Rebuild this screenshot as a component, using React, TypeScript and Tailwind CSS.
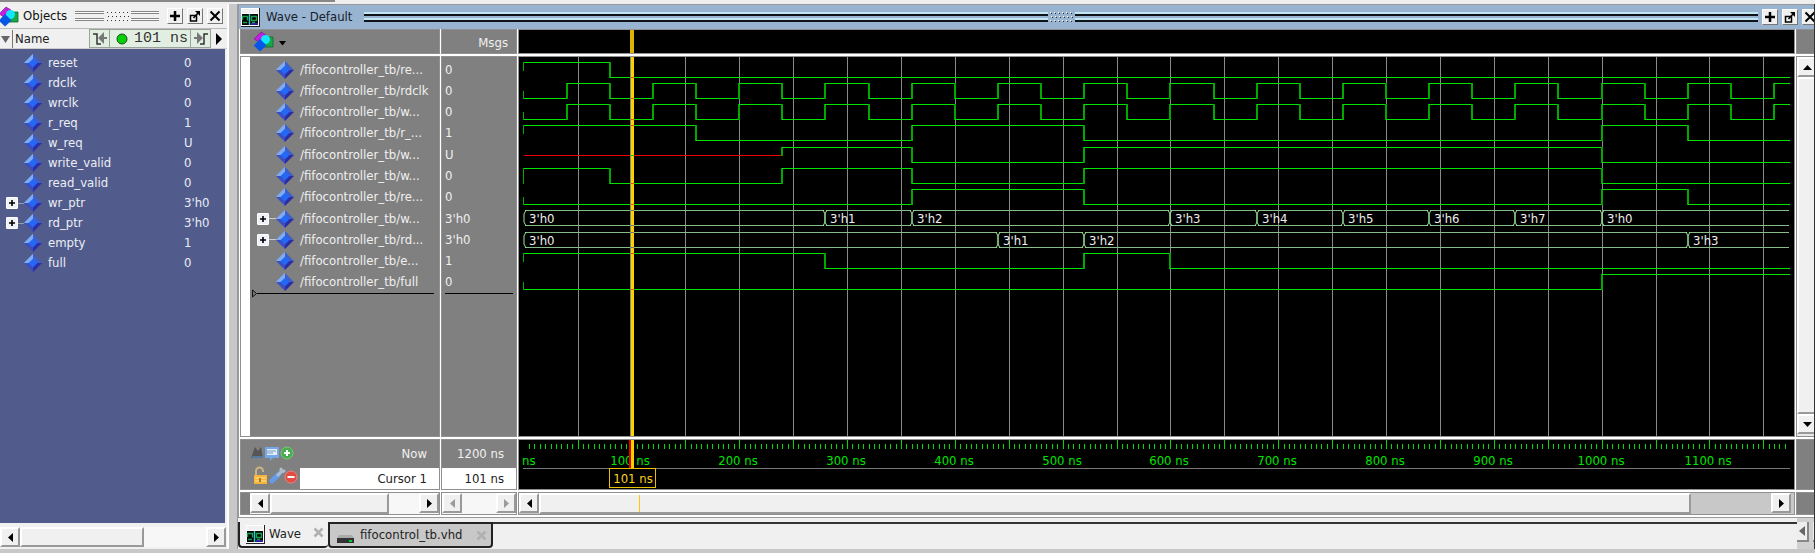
import React from "react";

type Signal = { name: string; value: string; bus?: boolean; path: string };

const signals: Signal[] = [
  { name: "reset", value: "0", path: "/fifocontroller_tb/re..." },
  { name: "rdclk", value: "0", path: "/fifocontroller_tb/rdclk" },
  { name: "wrclk", value: "0", path: "/fifocontroller_tb/w..." },
  { name: "r_req", value: "1", path: "/fifocontroller_tb/r_..." },
  { name: "w_req", value: "U", path: "/fifocontroller_tb/w..." },
  { name: "write_valid", value: "0", path: "/fifocontroller_tb/w..." },
  { name: "read_valid", value: "0", path: "/fifocontroller_tb/re..." },
  { name: "wr_ptr", value: "3'h0", bus: true, path: "/fifocontroller_tb/w..." },
  { name: "rd_ptr", value: "3'h0", bus: true, path: "/fifocontroller_tb/rd..." },
  { name: "empty", value: "1", path: "/fifocontroller_tb/e..." },
  { name: "full", value: "0", path: "/fifocontroller_tb/full" },
];

type Event = [number, string];
const END = 1175;
const clock: Event[] = [[0, "0"]];
for (let t = 40, v = 1; t < END; t += 40, v = 1 - v) clock.push([t, String(v)]);

const waves: Event[][] = [
  [[0, "1"], [80, "0"]],
  clock,
  clock,
  [[0, "1"], [160, "0"], [360, "1"], [520, "0"], [1000, "1"], [1080, "0"]],
  [[0, "U"], [240, "1"], [360, "0"], [520, "1"], [1000, "0"]],
  [[0, "1"], [80, "0"], [240, "1"], [360, "0"], [520, "1"], [1000, "0"]],
  [[0, "0"], [360, "1"], [520, "0"], [1000, "1"], [1080, "0"]],
  [[0, "3'h0"], [280, "3'h1"], [360, "3'h2"], [600, "3'h3"], [680, "3'h4"], [760, "3'h5"], [840, "3'h6"], [920, "3'h7"], [1000, "3'h0"]],
  [[0, "3'h0"], [440, "3'h1"], [520, "3'h2"], [1080, "3'h3"]],
  [[0, "1"], [280, "0"], [520, "1"], [600, "0"]],
  [[0, "0"], [1000, "1"]],
];

const xAt = (t: number) => Math.round(4.6 + t * 1.078);
const highAt = (row: number) => Math.round(4.6 + row * 21.25);
const CURSOR = 112;
const grid = Array.from({ length: 23 }, (_, i) => (i + 1) * 50);

function Diamond() {
  return (
    <svg width="18" height="18" viewBox="0 0 18 18" className="shrink-0" aria-hidden="true">
      <path d="M9 0L0 9l9-2z" fill="#78a8f4" />
      <path d="M9 0l9 9-9 1z" fill="#3f5fc8" />
      <path d="M0 9l9 9V9z" fill="#3b50c0" />
      <path d="M18 9l-9 9V9z" fill="#2c2ca4" />
      <path d="M9 4.5L13.5 9 9 13.500 4.500 9z" fill="#2468f6" />
      <path d="M9 0L0 9h4.500L9 4.500z" fill="#7eabf5" />
    </svg>
  );
}

function Shapes() {
  return (
    <svg width="21" height="21" viewBox="0 0 21 21" className="shrink-0" aria-hidden="true">
      <path d="M1 8L8 1l5 3-7 7z" fill="#c41fe0" stroke="#6f1485" strokeWidth=".6" />
      <path d="M11 6h9v10h-9z" fill="#18a845" stroke="#0d6b2b" strokeWidth=".8" />
      <circle cx="12.500" cy="8.500" r="4.500" fill="#12e6fb" />
      <path d="M7 8l6.500 6.500L7 20.500.8 14.500z" fill="#0757e6" />
    </svg>
  );
}

function WaveIcon() {
  return (
    <svg width="19" height="19" viewBox="0 0 19 19" className="shrink-0" aria-hidden="true">
      <path d="M0 0h19v19H0z" fill="#222" />
      <path d="M0 0h18v18H0z" fill="#fff" />
      <path d="M1 1h16v4H1z" fill="#f0f0f0" />
      <path d="M1 6h16v11H1z" fill="#050505" />
      <path d="M1.500 12V8.500h5v4M10.500 8.500h5v4h-5zM2 14.500h4M11 14.500h3" fill="none" stroke="#18a050" strokeWidth="1.400" />
      <path d="M8.500 6v11" stroke="#25cfd0" strokeWidth="1.400" />
      <path d="M10 16h7" stroke="#3928d8" strokeWidth="1.500" />
    </svg>
  );
}

function PlusBox({ label }: { label: string }) {
  return (
    <button aria-label={label} className="flex size-3 shrink-0 items-center justify-center rounded-[1px] border border-white bg-[#eef1f8]">
      <svg width="8" height="8" viewBox="0 0 8 8" aria-hidden="true">
        <path d="M1 4h6M4 1v6" stroke="#000" strokeWidth="1.600" />
      </svg>
    </button>
  );
}

function TitleButton({ label, children }: { label: string; children: React.ReactNode }) {
  return (
    <button aria-label={label} className="flex size-4 shrink-0 items-center justify-center border border-b-[#777] border-l-white border-r-[#777] border-t-white bg-[#f0f0f0]">
      <svg width="14" height="14" viewBox="0 0 14 14" fill="none" stroke="#000" strokeWidth="2" className="shrink-0" aria-hidden="true">
        {children}
      </svg>
    </button>
  );
}

function TitleButtons() {
  return (
    <>
      <TitleButton label="Maximize"><path d="M7 2v10M2 7h10" strokeWidth="2.500" /></TitleButton>
      <TitleButton label="Undock">
        <path d="M2.500 6.500h6v5.500h-6z" strokeWidth="1.500" />
        <path d="M7 2h5v5z" fill="#000" stroke="none" />
        <path d="M5.500 9l5-5.500" strokeWidth="1.500" />
      </TitleButton>
      <TitleButton label="Close"><path d="M2.500 2.500l9 9M11.500 2.500l-9 9" /></TitleButton>
    </>
  );
}

function Grip({ active }: { active?: boolean }) {
  const bar = active
    ? "h-1 border-b-2 border-[#101418] bg-[#c3e6f5]"
    : "h-[3px] border-b border-[#858585] bg-white border-t border-t-[#858585]";
  const column = active ? "flex min-w-0 flex-1 flex-col gap-[2px]" : "flex min-w-0 flex-1 flex-col gap-1";
  return (
    <div className="flex min-w-0 flex-1 items-center gap-[2px]" aria-hidden="true">
      <div className={column}><div className={bar} /><div className={bar} /></div>
      <svg width="23" height="11" className="shrink-0">
        {[0, 1, 2].map((r) =>
          [0, 1, 2, 3, 4, 5].map((c) => (
            <g key={`${r}-${c}`}>
              <rect x={c * 4 + (r % 2)} y={r * 4} width="1" height="1" fill="#fff" />
              <rect x={c * 4 + 1 + (r % 2)} y={r * 4 + 1} width="1" height="1" fill="#333" />
            </g>
          )),
        )}
      </svg>
      <div className={column}><div className={bar} /><div className={bar} /></div>
    </div>
  );
}

const arrows = {
  left: "M8 1L3 5.500 8 10z",
  right: "M3 1l5 4.500L3 10z",
  up: "M1 8l4.500-5L10 8z",
  down: "M1 3l4.500 5L10 3z",
};

function ScrollButton({ dir, dim, label }: { dir: keyof typeof arrows; dim?: boolean; label: string }) {
  return (
    <button aria-label={label} className="flex size-5 shrink-0 items-center justify-center border-2 border-b-[#999] border-l-white border-r-[#999] border-t-white bg-[#f0f0f0]">
      <svg width="11" height="11" viewBox="0 0 11 11" className="shrink-0" fill={dim ? "#9a9a9a" : "#000"} aria-hidden="true"><path d={arrows[dir]} /></svg>
    </button>
  );
}

const thumb = "border-2 border-b-[#999] border-l-white border-r-[#999] border-t-white bg-[#f0f0f0]";
const pane = "min-w-0 overflow-hidden outline-1 outline-[#909090]";

function ObjectsPanel() {
  return (
    <section className="flex w-[229px] shrink-0 flex-col overflow-hidden border-r-2 border-[#fff] bg-[#f0f0f0]">
      <header className="flex h-[25px] shrink-0 items-center gap-1 border-b border-[#bbb] pr-1">
        <div className="-ml-[2px] flex"><Shapes /></div>
        <h2 className="text-[#111]">Objects</h2>
        <div className="flex min-w-0 flex-1 px-1"><Grip /></div>
        <TitleButtons />
      </header>
      <div className="flex h-5 shrink-0 items-center border-b border-[#ccc]">
        <svg width="13" height="18" className="border-r border-[#777]" aria-hidden="true"><path d="M1 6h9L5.500 13z" fill="#666" /></svg>
        <span className="flex-1 pl-[2px] text-[#222]">Name</span>
        <div className="flex h-[19px] items-center border border-[#9aa39a] bg-[#e3eee2]">
          <button aria-label="Previous time" className="flex h-full w-5 items-center justify-center border-r border-[#9aa39a]">
            <svg width="16" height="14" viewBox="0 0 16 14" fill="none" aria-hidden="true">
              <path d="M1 2h4v10h4" stroke="#333" strokeWidth="1.500" />
              <path d="M15 6H8M11 2.500L7.500 6 11 9.500z" stroke="#777" fill="#777" strokeWidth="2" />
            </svg>
          </button>
          <svg width="22" height="12" aria-hidden="true"><circle cx="12" cy="6" r="5" fill="#05cf05" stroke="#174f17" /></svg>
          <span className="w-[58px] whitespace-pre text-center font-['Liberation_Mono',monospace] text-[15px] text-[#333]">101 ns</span>
          <button aria-label="Next time" className="flex h-full w-5 items-center justify-center border-l border-[#9aa39a]">
            <svg width="16" height="14" viewBox="0 0 16 14" fill="none" aria-hidden="true">
              <path d="M15 2h-4v10H7" stroke="#333" strokeWidth="1.500" />
              <path d="M1 6h6M5 2.500L8.500 6 5 9.500z" stroke="#777" fill="#777" strokeWidth="2" />
            </svg>
          </button>
        </div>
        <button aria-label="More" className="flex w-4 justify-center"><svg width="6" height="12" aria-hidden="true"><path d="M0 0l6 6-6 6z" /></svg></button>
      </div>
      <div className="mr-[2px] flex-1 bg-[#515c8c] pt-1 text-[#eceef4]">
        <table className="w-full table-fixed border-collapse">
          <tbody>
            {signals.map((s) => (
              <tr key={s.name} className="h-5">
                <th scope="row" className="w-[184px] p-0 text-left font-normal">
                  <div className="flex h-5 items-center">
                    <div className="flex w-6 items-center pl-[6px]">
                      {s.bus && <><PlusBox label={`Expand ${s.name}`} /><span className="h-px flex-1 bg-[#999]" /></>}
                    </div>
                    <Diamond />
                    <span className="pl-[6px]">{s.name}</span>
                  </div>
                </th>
                <td className="p-0">{s.value}</td>
              </tr>
            ))}
          </tbody>
        </table>
      </div>
      <div className="mb-[2px] mr-[1px] mt-1 flex h-5 shrink-0 bg-[#f7f7f7]">
        <ScrollButton dir="left" label="Scroll objects left" />
        <div className="flex flex-1"><div className={`w-2/3 ${thumb}`} /></div>
        <ScrollButton dir="right" label="Scroll objects right" />
      </div>
    </section>
  );
}

function Waveforms() {
  return (
    <svg className="block size-full text-[13px]" shapeRendering="crispEdges" role="img" aria-label="Waveforms">
      {grid.map((t) => <rect key={t} x={xAt(t)} y="0" width="1" height="100%" fill="#8a8a8a" />)}
      {waves.map((events, row) => {
        const high = highAt(row);
        const low = high + 15;
        const bus = !!signals[row].bus;
        const level = (v: string) => (v === "1" ? high : v === "0" ? low : high + 8);
        return (
          <g key={row}>
            {events.map(([t, v], i) => {
              const x = xAt(t);
              const next = i + 1 < events.length ? xAt(events[i + 1][0]) : xAt(END);
              if (bus) {
                return (
                  <g key={t}>
                    <path
                      d={`M${x + 1} ${high + 0.5}H${next - 1}M${x + 1} ${low + 0.5}H${next - 1}`}
                      stroke="#86bd86"
                    />
                    <path d={`M${x + 2} ${high}l-2 4v8l2 4`} stroke="#9be69b" fill="none" shapeRendering="auto" />
                    {i > 0 && <path d={`M${x - 2} ${high}l2 4v8l-2 4`} stroke="#9be69b" fill="none" shapeRendering="auto" />}
                    <text x={x + 5} y={high + 13} fill="#eee">{v}</text>
                  </g>
                );
              }
              const y = level(v);
              const from = i > 0 ? level(events[i - 1][1]) : row === 5 ? low : high + 8;
              return (
                <g key={t}>
                  {v !== "U" && <rect x={x - 1} y={Math.min(y, from)} width={i > 0 ? 2 : 1} height={Math.abs(y - from) + 1} fill="#00a800" />}
                  <rect x={x} y={y} width={next - x} height="1" fill={v === "U" ? "#f00000" : "#00e400"} />
                </g>
              );
            })}
          </g>
        );
      })}
      <rect x={CURSOR - 1} y="0" width="1" height="100%" fill="#7c8c70" />
      <rect x={CURSOR} y="0" width="3" height="100%" fill="#ffcf00" />
      {waves.map((events, row) => {
        const v = [...events].reverse().find(([t]) => t <= 101)![1];
        const high = highAt(row);
        if (signals[row].bus) {
          return <path key={row} d={`M${CURSOR} ${high + 0.5}h3M${CURSOR} ${high + 15.5}h3`} stroke="#777" />;
        }
        return <rect key={row} x={CURSOR} y={v === "1" ? high : v === "0" ? high + 15 : high + 8} width="3" height="1" fill={v === "U" ? "#00d000" : "#ff5000"} />;
      })}
    </svg>
  );
}

function Timeline() {
  const ticks = Array.from({ length: 234 }, (_, i) => (i + 1) * 5);
  return (
    <svg className="block size-full text-[13px]" role="img" aria-label="Time ruler">
      <g shapeRendering="crispEdges">
        {ticks.map((t) => (
          <rect key={t} x={xAt(t)} y={t % 50 ? 4 : 0} width="1" height={t % 50 ? 5 : 9} fill="#00d800" />
        ))}
        <rect x="4" y="28" width={xAt(END) - 4} height="1" fill="#777" />
      </g>
      <g fill="#00e400" textAnchor="middle">
        <text x="3" y="25" textAnchor="start">ns</text>
        {Array.from({ length: 11 }, (_, i) => (i + 1) * 100).map((t) => (
          <text key={t} x={xAt(t) - 1} y="25">{t} ns</text>
        ))}
      </g>
      <g shapeRendering="crispEdges">
        <rect x={CURSOR - 2} y="0" width="2" height="28" fill="#e00000" />
        <rect x={CURSOR} y="0" width="3" height="28" fill="#ffcf00" />
        <rect x="90.500" y="28.500" width="46" height="19" fill="#000" stroke="#e8c000" />
      </g>
      <text x="114" y="43" textAnchor="middle" fill="#ffd21c">101 ns</text>
    </svg>
  );
}

function FooterIcons() {
  return (
    <svg width="48" height="42" viewBox="0 0 48 42" aria-hidden="true">
      <path d="M1 14L5 3l3 4 3-4 2 11z" fill="#555" /><path d="M2 13h11" stroke="#5385bd" strokeWidth="1.500" />
      <path d="M15 3h14v11h-6l-3 3v-3h-5z" fill="#73a7e8" /><path d="M17 5h10v6H17z" fill="#e5edf7" /><path d="M17 7h9M17 9h6" stroke="#7998c3" />
      <circle cx="37" cy="9" r="6" fill="#48ad4e" stroke="#79c879" /><path d="M37 6v6M34 9h6" stroke="#fff" strokeWidth="2" />
      <path d="M6 31v-4a3.500 3.500 0 017 0v1" fill="none" stroke="#ccb480" strokeWidth="2" /><path d="M4 31h13v9H4z" fill="#f5b43c" /><path d="M5 34h11M5 37h11" stroke="#ffe08c" /><path d="M10 34v4" stroke="#8a6218" strokeWidth="1.500" />
      <path d="M22 37l7-7" stroke="#649bea" strokeWidth="5" strokeLinecap="round" /><path d="M28 31l3-3v-3M31 28l3-1" fill="none" stroke="#aebdcd" strokeWidth="3" strokeLinecap="round" />
      <circle cx="41" cy="33" r="6" fill="#e34c43" stroke="#ef827b" /><path d="M37.500 33h7" stroke="#fff" strokeWidth="2" />
    </svg>
  );
}

function WaveWindow() {
  return (
    <section className="flex min-h-0 flex-1 flex-col border-l border-t border-[#999] bg-[#f4f4f4]">
      <header className="flex h-6 shrink-0 items-center gap-1 bg-[#99b4d1] pl-[2px]">
        <WaveIcon />
        <h2 className="pl-[2px] pr-2 text-[#16202c]">Wave - Default</h2>
        <Grip active />
        <div className="-mr-1 flex shrink-0 gap-1"><TitleButtons /></div>
      </header>
      <div className="grid min-h-0 flex-1 grid-cols-[198px_74px_minmax(0,1fr)_17px] grid-rows-[23px_minmax(0,1fr)_49px_21px] gap-x-[3px] gap-y-1 bg-white pb-[3px] pl-[2px] pt-px">
        <div className={`${pane} flex items-center bg-[#808080] pl-3`}>
          <Shapes />
          <button aria-label="Wave options" className="ml-[5px] mt-1"><svg width="7" height="5" className="block" aria-hidden="true"><path d="M0 0h7L3.500 4.500z" /></svg></button>
        </div>
        <div className={`${pane} flex items-center justify-end bg-[#808080] pr-2 pt-[2px] text-[#f0f0f0]`}>Msgs</div>
        <div className={`${pane} bg-black`}>
          <svg className="block size-full" aria-hidden="true"><rect x={CURSOR - 1} width="4" height="100%" fill="#dcb300" /></svg>
        </div>
        <div className={`${pane} bg-[#808080]`} />

        <div className={`${pane} border-l-[9px] border-white bg-[#808080] pt-[2px] text-[#f0f0f0]`}>
          <ul className="grid h-[234px] grid-rows-11">
            {signals.map((s) => (
              <li key={s.name} className="flex items-center whitespace-nowrap">
                <div className="flex w-[26px] shrink-0 items-center pl-[7px]">
                  {s.bus && <><PlusBox label={`Expand ${s.path} ${s.name}`} /><span className="h-px flex-1 bg-[#ccc]" /></>}
                </div>
                <Diamond />
                <span className="pl-[6px]">{s.path}</span>
              </li>
            ))}
          </ul>
          <div className="-mt-1 flex items-center pl-[2px] pr-[5px]">
            <svg width="5" height="9" aria-hidden="true"><path d="M.5 1v7l4-3.500z" fill="#777" stroke="#111" /></svg>
            <div className="h-px flex-1 bg-black" />
          </div>
        </div>
        <div className={`${pane} bg-[#808080] pt-[2px] text-[#f0f0f0]`}>
          <ul className="grid h-[234px] grid-rows-11">
            {signals.map((s) => <li key={s.name} className="flex items-center pl-[3px]">{s.value}</li>)}
          </ul>
          <div className="mx-[3px] h-px bg-black" />
        </div>
        <div className={`${pane} bg-black`}><Waveforms /></div>
        <div className={`${pane} flex flex-col bg-[#e8e8e8] pb-[2px]`}>
          <ScrollButton dir="up" label="Scroll waves up" />
          <div className={`w-5 flex-1 ${thumb}`} />
          <ScrollButton dir="down" label="Scroll waves down" />
        </div>

        <div className={`${pane} flex bg-[#808080]`}>
          <div className="w-[59px] shrink-0 pl-[9px] pt-1"><FooterIcons /></div>
          <div className="flex flex-1 flex-col text-right">
            <div className="h-7 pr-3 leading-7 text-[#f0f0f0]">Now</div>
            <div className="h-[21px] bg-white pr-3 leading-[22px] text-[#222]">Cursor 1</div>
          </div>
        </div>
        <div className={`${pane} bg-[#808080] text-right`}>
          <div className="h-7 pr-3 leading-7 text-[#f0f0f0]">1200 ns</div>
          <div className="h-[21px] bg-white pr-3 leading-[22px] text-[#222]">101 ns</div>
        </div>
        <div className={`${pane} bg-black`}><Timeline /></div>
        <div className={`${pane} bg-[#808080]`} />

        <div className={`${pane} flex border-l-[9px] border-[#808080] bg-[#f7f7f7]`}>
          <ScrollButton dir="left" label="Scroll names left" />
          <div className="flex flex-1"><div className={`w-4/5 ${thumb}`} /></div>
          <ScrollButton dir="right" label="Scroll names right" />
        </div>
        <div className={`${pane} flex justify-between bg-[#f7f7f7]`}>
          <ScrollButton dir="left" dim label="Scroll values left" />
          <ScrollButton dir="right" dim label="Scroll values right" />
        </div>
        <div className={`${pane} flex bg-[#c8c8c8] pr-[3px]`}>
          <ScrollButton dir="left" label="Scroll time left" />
          <div className="flex flex-1">
            <div className={`w-[93.5%] pl-[98px] ${thumb}`}><div className="h-full w-px bg-[#ffc800]" /></div>
          </div>
          <ScrollButton dir="right" label="Scroll time right" />
        </div>
        <div className={`${pane} bg-[#808080]`} />
      </div>
    </section>
  );
}

function TabClose({ label }: { label: string }) {
  return (
    <button aria-label={label}>
      <svg width="11" height="11" viewBox="0 0 11 11" className="block" aria-hidden="true"><path d="M1.500 1.500l8 8M9.500 1.500l-8 8" stroke="#b0b0b0" strokeWidth="2.500" /></svg>
    </button>
  );
}

function Tabs() {
  return (
    <div className="flex h-8 shrink-0 items-start border-t border-[#999] bg-[#f0f0f0]">
      <div className="mt-1 flex h-[26px] w-[90px] shrink-0 items-center gap-1 rounded-b border-b-2 border-l-2 border-[#222] pl-[6px] text-[#222]">
        <WaveIcon />
        <button className="flex-1 text-left">Wave</button>
        <div className="pr-1"><TabClose label="Close Wave" /></div>
      </div>
      <div className="mt-1 flex h-[26px] w-[165px] shrink-0 items-center gap-[6px] rounded-b border-2 border-[#222] bg-[#c8c8c8] pl-[7px] pr-1 text-[#222]">
        <svg width="17" height="16" aria-hidden="true"><path d="M2 8h13l2 3v5H0v-5z" fill="#aaa" /><path d="M0 11h17v5H0z" fill="#333" /><path d="M12 13h3v2h-3z" fill="#0c3" /></svg>
        <button className="flex-1 whitespace-nowrap text-left">fifocontrol_tb.vhd</button>
        <TabClose label="Close fifocontrol_tb.vhd" />
      </div>
      <div className="mt-1 h-[26px] flex-1 border-t-2 border-[#333]" />
      <div className="flex h-full w-[17px] shrink-0 overflow-hidden bg-[#d0d0d0] pt-1">
        <button aria-label="Previous tab" className="flex h-5 w-3 shrink-0 items-center justify-center border-b-2 border-r-2 border-[#888] bg-[#eee]">
          <svg width="7" height="10" aria-hidden="true"><path d="M6 0v10L0 5z" fill="#666" /></svg>
        </button>
        <button aria-label="Next tab" className="ml-1 h-5 w-3 shrink-0 border-b-2 border-[#888] bg-[#eee]" />
      </div>
    </div>
  );
}

export default function App() {
  return (
    <div className="flex h-screen min-h-[420px] flex-col overflow-hidden bg-[#c8c8c8] font-['DejaVu_Sans_Condensed','Noto_Sans',sans-serif] text-[13px] leading-4">
      <div className="flex h-1 shrink-0 bg-[#eee]"><div className="h-[2px] w-[335px] bg-[#888]" /></div>
      <div className="flex min-h-0 flex-1 pb-1">
        <ObjectsPanel />
        <div className="w-2 shrink-0" />
        <main className="flex min-w-0 flex-1 flex-col overflow-hidden border-l border-r border-l-[#999] border-r-[#333] bg-white">
          <WaveWindow />
          <Tabs />
        </main>
      </div>
    </div>
  );
}
